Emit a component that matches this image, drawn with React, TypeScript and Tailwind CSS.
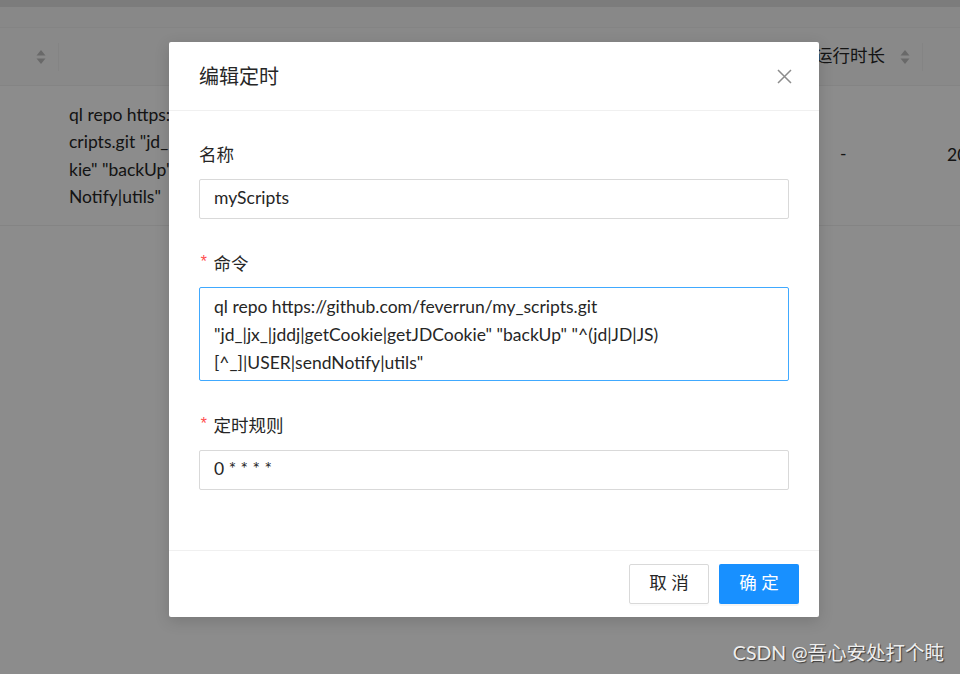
import React from 'react';

const font = "font-['Lato','Noto_Sans_CJK_SC',sans-serif]";

const SortIcon = () => (
  <svg width="10" height="16" viewBox="0 0 10 16" className="text-[#bfbfbf]">
    <path d="M5 1 L9.5 6.5 H0.5 Z" fill="currentColor" />
    <path d="M5 15 L9.5 9.5 H0.5 Z" fill="currentColor" />
  </svg>
);

const Divider = () => <div className="w-px h-[28px] bg-[#f0f0f0]" />;

const Label = ({ children, required }: { children: React.ReactNode; required?: boolean }) => (
  <div className="h-[27.5px] mb-[10px] flex items-center text-[17.5px] text-[#262626] leading-[27.5px]">
    {required && <span className="text-[#ff4d4f] mr-[5px] text-[16px] font-['Liberation_Mono',monospace]">*</span>}
    {children}
  </div>
);

export default function App() {
  return (
    <div className={`relative w-[960px] h-[674px] overflow-hidden bg-white ${font}`}>
      {/* page behind the modal */}
      <div className="h-[7px] bg-[#e2e2e2]" />
      <div className="h-[21px] bg-[#f7f7f7] border-b border-[#f0f0f0]" />
      <div className="h-[58px] bg-[#fafafa] border-b border-[#f0f0f0] flex items-center text-[17.5px] text-[#262626]">
        <div className="w-[58px] flex justify-end pr-[12px]">
          <SortIcon />
        </div>
        <Divider />
        <div className="flex-1" />
        <span className="mr-[15px] whitespace-nowrap">运行时长</span>
        <div className="mr-[12px]"><SortIcon /></div>
        <Divider />
        <div className="w-[37px]" />
      </div>
      <div className="h-[140px] border-b border-[#f0f0f0] flex items-center text-[17.5px] text-[#262626]">
        <div className="w-[69px]" />
        <div className="w-[400px] overflow-hidden leading-[27.5px] whitespace-nowrap">
          <div>ql repo https://github.com/feverrun/my_s</div>
          <div>cripts.git "jd_|jx_|jddj|getCookie|getJDCoo</div>
          <div>kie" "backUp" "^(jd|JD|JS)[^_]|USER|send</div>
          <div>Notify|utils"</div>
        </div>
        <div className="flex-1" />
        <div className="w-[107px] -mt-[2px]">-</div>
        <div className="w-[13px] overflow-hidden whitespace-nowrap">20</div>
      </div>

      {/* mask */}
      <div className="absolute inset-0 bg-black/45" />

      {/* modal */}
      <div className="absolute left-[169px] top-[42px] w-[650px] bg-white rounded-[2px] shadow-[0_4px_15px_rgba(0,0,0,0.15)]">
        <div className="h-[69px] px-[30px] border-b border-[#f0f0f0] flex items-center justify-between">
          <span className="text-[20px] text-[#262626]">编辑定时</span>
          <svg width="15" height="15" viewBox="0 0 15 15" className="mr-[-3px]">
            <path d="M1 1 L14 14 M14 1 L1 14" stroke="#8c8c8c" strokeWidth="1.5" />
          </svg>
        </div>
        <div className="pt-[30px] px-[30px]">
          <Label>名称</Label>
          <div className="h-[40px] border border-[#d9d9d9] rounded-[2px] px-[14px] flex items-center text-[17.5px] text-[#262626]">
            myScripts
          </div>
          <div className="h-[31px]" />
          <Label required>命令</Label>
          <div className="h-[94px] border border-[#40a9ff] rounded-[2px] px-[14px] pt-[5px] text-[17.5px] leading-[28px] text-[#262626]">
            ql repo https://github.com/feverrun/my_scripts.git
            <br />
            "jd_|jx_|jddj|getCookie|getJDCookie" "backUp" "^(jd|JD|JS)
            <br />
            [^_]|USER|sendNotify|utils"
          </div>
          <div className="h-[31px]" />
          <Label required>定时规则</Label>
          <div className="h-[40px] border border-[#d9d9d9] rounded-[2px] px-[14px] flex items-center text-[17.5px] text-[#262626]">
            0 * * * *
          </div>
          <div className="h-[60px]" />
        </div>
        <div className="border-t border-[#f0f0f0] px-[20px] py-[13px] flex justify-end gap-[10px]">
          <button className="w-[80px] h-[40px] border border-[#d9d9d9] rounded-[2px] bg-white text-[17.5px] text-[#262626] shadow-[0_2px_0_rgba(0,0,0,0.015)]">
            取 消
          </button>
          <button className="w-[80px] h-[40px] rounded-[2px] bg-[#1890ff] text-[17.5px] text-white shadow-[0_2px_0_rgba(0,0,0,0.045)]">
            确 定
          </button>
        </div>
      </div>

      {/* watermark */}
      <div className="absolute right-[16px] bottom-[7px] text-[19.5px] text-[#eeeeee] [text-shadow:1px_1px_1px_rgba(0,0,0,0.6)] whitespace-nowrap">
        CSDN @吾心安处打个盹
      </div>
    </div>
  );
}
